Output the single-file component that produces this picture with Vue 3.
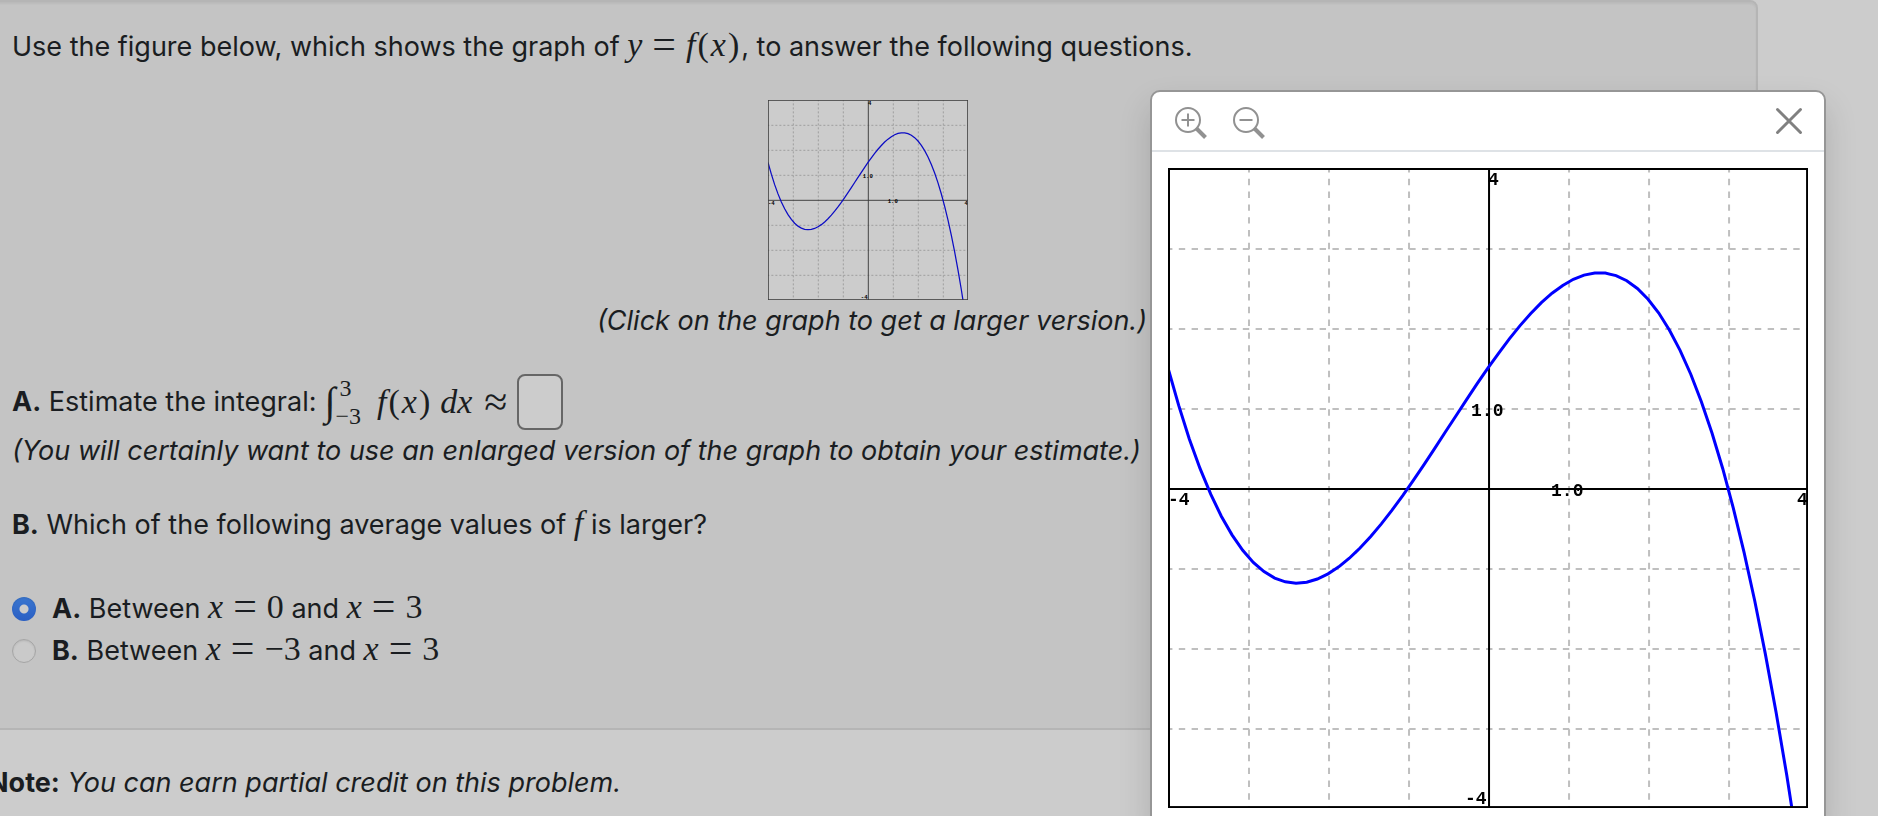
<template>
    <div class="page">
        <main class="content">
            <section class="problem">
                <p>
                    Use the figure below, which shows the graph of
                    <span class="math"><i>y</i><span class="op">=</span><i>f</i><span class="paren">(</span><i>x</i><span class="paren">)</span></span>, to answer the following questions.
                </p>

                <div class="figure">
                    <button class="thumb" type="button" aria-label="Enlarge graph" @click="showViewer = true">
                        <PlotGraph class="plot plot-small" />
                    </button>
                    <em>(Click on the graph to get a larger version.)</em>
                </div>

                <div class="part">
                    <div class="estimate">
                        <label for="integral"><b>A.</b> Estimate the integral:</label>
                        <span class="math formula">
                            <span class="integral">∫</span>
                            <span class="limits"><span>3</span><span>−3</span></span>
                            <span><i>f</i><span class="paren">(</span><i>x</i><span class="paren">)</span></span>
                            <i class="dx">dx</i>
                            <span class="approx">≈</span>
                        </span>
                        <input id="integral" v-model="answer" class="answer" type="text">
                    </div>
                    <p><em>(You will certainly want to use an enlarged version of the graph to obtain your estimate.)</em></p>
                </div>

                <p class="part">
                    <b>B.</b> Which of the following average values of <span class="math"><i>f</i></span> is larger?
                </p>

                <div class="choices">
                    <label v-for="choice in choices" :key="choice.letter" class="choice">
                        <input v-model="selected" type="radio" name="average" :value="choice.letter">
                        <span>
                            <b>{{ choice.letter }}.</b> Between
                            <span class="math"><i>x</i><span class="op">=</span>{{ choice.from }}</span>
                            and
                            <span class="math"><i>x</i><span class="op">=</span>{{ choice.to }}</span>
                        </span>
                    </label>
                </div>
            </section>

            <p class="note"><b>Note:</b> <em>You can earn partial credit on this problem.</em></p>
        </main>

        <div v-if="showViewer" class="viewer" role="dialog" aria-label="Graph">
            <div class="viewer-header">
                <button type="button" aria-label="Zoom in" @click="zoomBy(1.25)">
                    <svg class="icon" viewBox="0 0 34 34">
                        <circle cx="14" cy="14" r="12" />
                        <path d="M7.5 14h13M14 7.5v13" />
                        <path class="handle" d="M22.5 22.5l9 9" />
                    </svg>
                </button>
                <button type="button" aria-label="Zoom out" @click="zoomBy(0.8)">
                    <svg class="icon" viewBox="0 0 34 34">
                        <circle cx="14" cy="14" r="12" />
                        <path d="M7.5 14h13" />
                        <path class="handle" d="M22.5 22.5l9 9" />
                    </svg>
                </button>
                <button class="close" type="button" aria-label="Close" @click="showViewer = false">
                    <svg class="icon-close" viewBox="0 0 28 28">
                        <path d="M2.5 2.5l23 23M25.5 2.5l-23 23" />
                    </svg>
                </button>
            </div>
            <div class="viewer-body">
                <PlotGraph class="plot" :style="{ width: zoom * 100 + '%' }" />
            </div>
        </div>
    </div>
</template>

<script setup>
import { h, ref } from 'vue';

const answer = ref('');
const selected = ref('A');
const showViewer = ref(true);
const zoom = ref(1);

const choices = [
    { letter: 'A', from: '0', to: '3' },
    { letter: 'B', from: '−3', to: '3' }
];

const zoomBy = (factor) => {
    zoom.value = Math.min(4, Math.max(1, zoom.value * factor));
};

// 80 units of the viewBox per unit of the graph, origin in the middle
const gridPath = [80, 160, 240, 400, 480, 560]
    .map((n) => `M${n + 1} 0V640M0 ${n + 1}H640`)
    .join('');

const f = (x) => -0.143 * (x + 3.5) * (x + 1) * (x - 3);

const curvePoints = Array.from({ length: 61 }, (_, i) => {
    const x = -4 + (i * 8) / 60;
    return `${(320 + x * 80).toFixed(1)},${(320 - f(x) * 80).toFixed(1)}`;
}).join(' ');

const labels = [
    { text: '4', x: 320, y: 17 },
    { text: '-4', x: 297, y: 636 },
    { text: '-4', x: 0, y: 337 },
    { text: '4', x: 629, y: 337 },
    { text: '1.0', x: 303, y: 248 },
    { text: '1.0', x: 383, y: 328 }
];

const PlotGraph = () => h('svg', { viewBox: '0 0 640 640' }, [
    h('path', { class: 'plot-grid', d: gridPath }),
    h('path', { class: 'plot-axis', d: 'M321 0V640M0 321H640' }),
    h('polyline', { class: 'plot-curve', points: curvePoints }),
    ...labels.map(({ text, x, y }) => h('text', { class: 'plot-label', x, y }, text)),
    h('rect', { class: 'plot-frame', x: 1, y: 1, width: 638, height: 638 })
]);
</script>

<style>
body {
    background: #cccccc;
}
</style>

<style scoped>
.page {
    color: #1a1d21;
    font-family: Inter, "Liberation Sans", sans-serif;
    font-size: 27px;
    line-height: 42px;
    overflow: hidden;
}

.page p {
    margin: 0;
}

.content {
    margin: 0 120px 0 -12px;
}

.problem {
    display: flex;
    flex-direction: column;
    gap: 32px;
    padding: 24px 24px 56px 22px;
    background: #c4c4c4;
    border: 2px solid #b5b5b5;
    border-radius: 8px;
    box-shadow: inset 0 2px 2px rgba(0, 0, 0, 0.05);
}

.figure {
    display: flex;
    flex-direction: column;
    align-items: center;
}

.thumb {
    width: 200px;
    margin-right: 8px;
    padding: 0;
    border: none;
    background: #cccccc;
    cursor: pointer;
}

/* Formulas */
.math {
    font-family: "Liberation Serif", serif;
    font-size: 34px;
    line-height: 32px;
    white-space: nowrap;
}

.op {
    margin: 0 10px;
    font-size: 42px;
    line-height: 32px;
    vertical-align: -2px;
}

.paren {
    margin: 0 2px;
}

.estimate {
    display: flex;
    align-items: center;
    gap: 8px;
}

.formula {
    display: flex;
    align-items: center;
}

.integral {
    font-size: 40px;
    line-height: 48px;
}

.limits {
    display: flex;
    flex-direction: column;
    gap: 4px;
    margin-right: 16px;
    font-size: 24px;
    line-height: 24px;
}

.limits span:first-child {
    margin-left: 4px;
}

.dx {
    margin: 0 12px 0 8px;
}

.approx {
    margin-right: 2px;
    font-size: 42px;
}

.answer {
    box-sizing: border-box;
    width: 46px;
    height: 56px;
    padding: 0 8px;
    border: 2px solid #666666;
    border-radius: 8px;
    background: #cccccc;
    color: inherit;
    font: inherit;
}

.choices {
    display: flex;
    flex-direction: column;
    margin-top: 10px;
}

.choice {
    display: flex;
    align-items: center;
    gap: 16px;
}

.choice input {
    appearance: none;
    flex: none;
    width: 24px;
    height: 24px;
    margin: 0;
    border: 1px solid #a5a5a5;
    border-radius: 50%;
    background: #cacaca;
    box-shadow: inset 0 1px 2px rgba(0, 0, 0, 0.1);
}

.choice input:checked {
    border: none;
    background: radial-gradient(circle, #cccccc 4px, transparent 5px), linear-gradient(#3a76cf, #2a5fc4);
}

.note {
    padding-top: 32px;
}

/* Graph */
.plot {
    --curve: #0000ff;
    --curve-width: 3px;
    --line: #000000;
    --line-width: 2px;
    --grid: #bfbfbf;
    --grid-width: 2px;
    display: block;
    width: 100%;
    aspect-ratio: 1;
}

.plot-small {
    --curve: #0c0cc4;
    --curve-width: 4px;
    --line: #3c3c3c;
    --line-width: 3px;
    --grid: #9c9c9c;
    --grid-width: 3px;
}

.plot :deep(.plot-grid) {
    fill: none;
    stroke: var(--grid);
    stroke-width: var(--grid-width);
    stroke-dasharray: 6.4 6.4;
    stroke-dashoffset: 2;
}

.plot :deep(.plot-axis),
.plot :deep(.plot-frame) {
    fill: none;
    stroke: var(--line);
    stroke-width: var(--line-width);
}

.plot :deep(.plot-curve) {
    fill: none;
    stroke: var(--curve);
    stroke-width: var(--curve-width);
}

.plot :deep(.plot-label) {
    fill: #000000;
    font-family: "Liberation Mono", monospace;
    font-size: 18px;
    font-weight: 700;
}

/* Viewer */
.viewer {
    position: fixed;
    top: 90px;
    right: 52px;
    box-sizing: border-box;
    width: 36%;
    border: 2px solid #969696;
    border-radius: 10px;
    background: #ffffff;
    box-shadow: 0 16px 32px rgba(0, 0, 0, 0.15);
}

.viewer-header {
    display: flex;
    align-items: center;
    gap: 24px;
    height: 58px;
    padding: 0 21px 0 22px;
    border-bottom: 2px solid #dee2e6;
}

.viewer-header button {
    padding: 0;
    border: none;
    background: none;
    cursor: pointer;
}

.viewer-header .close {
    margin-left: auto;
}

.icon,
.icon-close {
    display: block;
    fill: none;
    stroke: #919191;
    stroke-width: 2;
}

.icon {
    width: 34px;
    height: 34px;
    margin-top: 4px;
}

.icon .handle {
    stroke-width: 4;
}

.icon-close {
    width: 28px;
    height: 28px;
    stroke: #808080;
    stroke-width: 3;
    stroke-linecap: round;
}

.viewer-body {
    padding: 16px;
    overflow: hidden;
}
</style>
